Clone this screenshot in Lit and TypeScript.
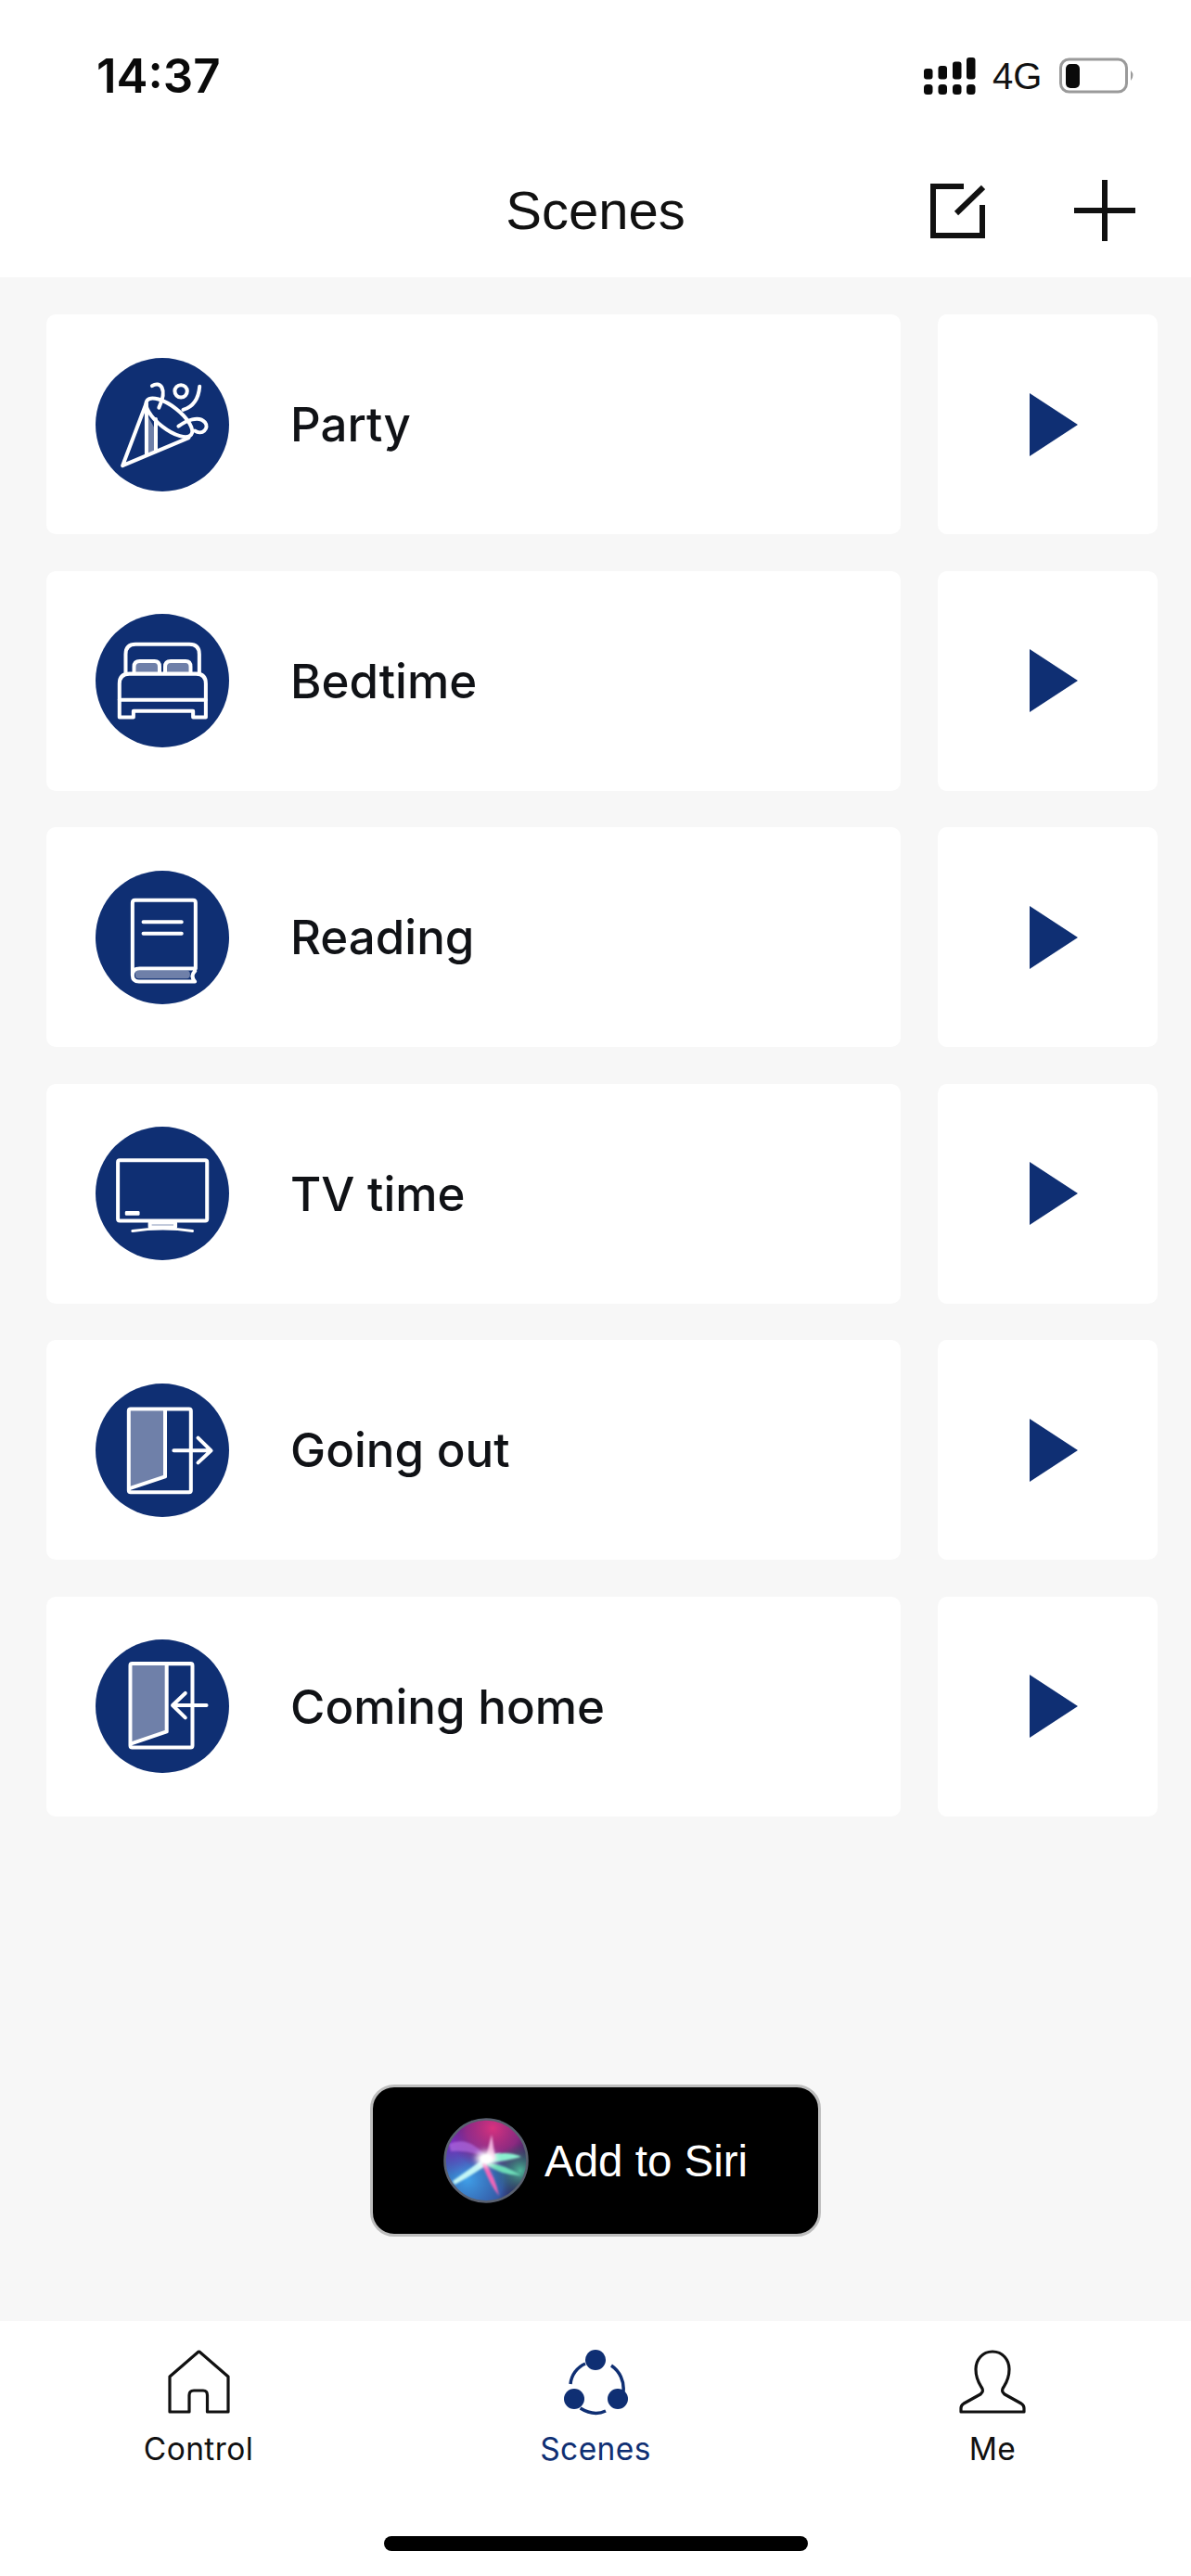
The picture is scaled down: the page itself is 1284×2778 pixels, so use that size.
import { LitElement, html, css, svg } from "lit";
import { customElement } from "lit/decorators.js";

const icons: Record<string, { vb: string; body: unknown }> = {
  party: {
    vb: "68 78 430 430",
    body: svg`
      <polygon class="g" points="232,258 260,308 260,378 232,392"/>
      <path d="M155 425 L232 222 M155 425 L368 335 M232 225 V388 M262 275 V375"/>
      <ellipse cx="305" cy="270" rx="90" ry="36" transform="rotate(38 305 270)"/>
      <path d="M250 168 C275 152 302 175 272 238"/>
      <circle cx="343" cy="185" r="20"/>
      <path d="M403 170 C400 208 382 235 350 245"/>
      <path d="M335 298 C360 280 400 262 420 285 C436 305 410 328 388 313"/>`,
  },
  bed: {
    vb: "68 65 430 430",
    body: svg`
      <rect class="g" x="197" y="222" width="72" height="32"/>
      <rect class="g" x="297" y="222" width="72" height="32"/>
      <path d="M165 255 V195 Q165 163 197 163 H370 Q402 163 402 195 V255"/>
      <path d="M192 256 V235 Q192 217 210 217 H258 Q274 217 274 235 V256"/>
      <path d="M292 256 V235 Q292 217 310 217 H358 Q374 217 374 235 V256"/>
      <path d="M145 398 V290 Q145 258 177 258 H392 Q423 258 423 290 V398 H382 V378 H190 V398 Z"/>
      <path d="M145 342 H423"/>`,
  },
  book: {
    vb: "68 85 430 430",
    body: svg`
      <rect class="g" x="196" y="407" width="176" height="25" rx="10"/>
      <path d="M187 420 V188 Q187 180 195 180 H382 Q390 180 390 188 V400 H210 Q187 400 187 422 Q187 442 208 442 H388 Q372 425 388 408"/>
      <path d="M222 250 H345 M222 287 H345"/>`,
  },
  tv: {
    vb: "68 75 430 430",
    body: svg`
      <rect x="140" y="183" width="287" height="195" rx="6"/>
      <rect class="w" x="163" y="347" width="47" height="14" rx="4"/>
      <rect x="243" y="385" width="82" height="13" fill="#5f7ba0" stroke="none"/>
      <path d="M187 411 Q285 396 380 411" style="stroke-width:9"/>`,
  },
  out: {
    vb: "68 95 430 430",
    body: svg`
      <polygon class="g" points="180,182 290,182 290,395 180,430"/>
      <rect x="175" y="177" width="200" height="268" rx="6"/>
      <path d="M292 180 V395 L180 432"/>
      <path d="M320 311 H438 M398 270 L440 311 L398 350"/>`,
  },
  in: {
    vb: "68 85 430 430",
    body: svg`
      <polygon class="g" points="185,170 295,170 295,380 185,418"/>
      <rect x="180" y="163" width="200" height="270" rx="6"/>
      <path d="M297 168 V382 L185 420"/>
      <path d="M425 297 H318 M357 258 L316 297 L357 337"/>`,
  },
};

const scenes = [
  { name: "Party", icon: "party" },
  { name: "Bedtime", icon: "bed" },
  { name: "Reading", icon: "book" },
  { name: "TV time", icon: "tv" },
  { name: "Going out", icon: "out" },
  { name: "Coming home", icon: "in" },
];

@customElement("app-root")
export class AppRoot extends LitElement {
  static styles = css`
    :host {
      display: flex;
      flex-direction: column;
      width: 1284px;
      height: 2778px;
      background: #f7f7f7;
      font-family: Inter, "Liberation Sans", sans-serif;
      color: #111;
    }
    .header {
      background: #fff;
      height: 299px;
      box-sizing: border-box;
      padding-top: 62px;
      flex: none;
    }
    .status {
      display: flex;
      align-items: center;
      height: 40px;
      padding: 0 60px 0 104px;
    }
    .time {
      font-size: 51px;
      font-weight: 600;
      line-height: 40px;
      color: #0a0a0a;
    }
    .sys {
      margin-left: auto;
      display: flex;
      align-items: center;
    }
    .sig { width: 56px; height: 40px; display: block; }
    .net {
      font-size: 40px;
      line-height: 40px;
      margin: 0 19px 0 18px;
      width: 53px;
      white-space: nowrap;
      font-family: "Liberation Sans", sans-serif;
    }
    .bat { width: 82px; height: 40px; display: block; }
    .nav {
      margin-top: 92px;
      height: 66px;
      display: grid;
      grid-template-columns: 1fr auto 1fr;
      align-items: center;
    }
    .title {
      grid-column: 2;
      font-size: 58px;
      font-weight: 400;
      line-height: 66px;
      font-family: "Liberation Sans", sans-serif;
      color: #111;
    }
    .actions {
      grid-column: 3;
      justify-self: end;
      display: flex;
      align-items: center;
      gap: 96px;
      padding-right: 60px;
    }
    .actions svg { display: block; }
    .edit { width: 59px; height: 59px; }
    .plus { width: 66px; height: 66px; }
    .main {
      flex: 1;
      display: flex;
      flex-direction: column;
      padding: 40px 36px 91px 50px;
    }
    .list { display: grid; gap: 39.6px; }
    .row {
      display: grid;
      grid-template-columns: 921px 237px;
      gap: 40px;
    }
    .card {
      background: #fff;
      border-radius: 10px;
      height: 237px;
      display: flex;
      align-items: center;
    }
    .scene { padding-left: 53px; gap: 66px; }
    .circle {
      width: 144px;
      height: 144px;
      border-radius: 50%;
      background: #0f2f73;
      flex: none;
    }
    .circle svg { width: 144px; height: 144px; display: block; }
    .circle path, .circle ellipse, .circle circle, .circle rect {
      fill: none;
      stroke: #fff;
      stroke-width: 12;
      stroke-linecap: round;
      stroke-linejoin: round;
    }
    .circle .g { fill: #6f80a9; stroke: none; }
    .circle .w { fill: #fff; stroke: none; }
    .name {
      font-size: 51px;
      font-weight: 500;
      color: #101216;
      white-space: nowrap;
    }
    .play { justify-content: center; padding-left: 12px; box-sizing: border-box; }
    .play svg { width: 52px; height: 68px; display: block; }
    .siri {
      margin: auto 0 0 349px;
      width: 486px;
      height: 164px;
      box-sizing: border-box;
      border: 3px solid #bdbdbd;
      border-radius: 26px;
      background: #000;
      display: flex;
      align-items: center;
      padding-left: 76px;
      gap: 17px;
    }
    .orb { width: 92px; height: 92px; display: block; flex: none; }
    .siri span {
      color: #fff;
      font-size: 47.5px;
      font-family: "Liberation Sans", sans-serif;
      white-space: nowrap;
    }
    .tabbar {
      flex: none;
      height: 275px;
      background: #fff;
      display: flex;
      flex-direction: column;
      box-sizing: border-box;
      padding-top: 28px;
    }
    .tabs { display: grid; grid-template-columns: repeat(3, 1fr); }
    .tab {
      display: flex;
      flex-direction: column;
      align-items: center;
      gap: 15px;
      font-size: 33.5px;
      line-height: 38px;
      color: #111;
      font-weight: 400;
      letter-spacing: 0.4px;
    }
    .tab svg { width: 76px; height: 76px; display: block; }
    .tab.on { color: #0f2f73; }
    .bar {
      margin: auto 0 27px 414px;
      width: 457px;
      height: 16px;
      border-radius: 8px;
      background: #000;
    }
  `;

  render() {
    return html`
      <div class="header">
        <div class="status">
          <div class="time">14:37</div>
          <div class="sys">
            <svg class="sig" viewBox="0 0 56 40" fill="#0a0a0a">
              <rect x="0" y="12" width="9.5" height="11.5" rx="3"/>
              <rect x="15.5" y="9" width="9.5" height="14.5" rx="3"/>
              <rect x="31" y="4.5" width="9.5" height="19" rx="3"/>
              <rect x="46" y="0" width="9.5" height="23.5" rx="3"/>
              <rect x="0" y="29" width="9.5" height="11" rx="3.5"/>
              <rect x="15.5" y="29" width="9.5" height="11" rx="3.5"/>
              <rect x="31" y="29" width="9.5" height="11" rx="3.5"/>
              <rect x="46" y="29" width="9.5" height="11" rx="3.5"/>
            </svg>
            <div class="net">4G</div>
            <svg class="bat" viewBox="0 0 82 40">
              <rect x="1.5" y="2" width="71" height="35" rx="9" fill="none" stroke="#9a9a9a" stroke-width="3"/>
              <rect x="7" y="7" width="15" height="26" rx="5" fill="#0a0a0a"/>
              <path d="M77 14 Q82 19 77 25 Z" fill="#9a9a9a"/>
            </svg>
          </div>
        </div>
        <div class="nav">
          <div class="title">Scenes</div>
          <div class="actions">
            <svg class="edit" viewBox="0 0 59 59" fill="none" stroke="#111" stroke-width="6">
              <path d="M36 3 H3 V56 H56 V23"/>
              <path d="M28 32 L57 4"/>
            </svg>
            <svg class="plus" viewBox="0 0 66 66" fill="none" stroke="#111" stroke-width="6">
              <path d="M33 0 V66 M0 33 H66"/>
            </svg>
          </div>
        </div>
      </div>
      <div class="main">
        <div class="list">
          ${scenes.map(
            (s) => html`
              <div class="row">
                <div class="card scene">
                  <div class="circle">
                    <svg viewBox=${icons[s.icon].vb}>${icons[s.icon].body}</svg>
                  </div>
                  <div class="name">${s.name}</div>
                </div>
                <div class="card play">
                  <svg viewBox="0 0 52 68"><polygon points="0,0 52,34 0,68" fill="#0f2f73"/></svg>
                </div>
              </div>
            `
          )}
        </div>
        <div class="siri">
          <svg class="orb" viewBox="0 0 92 92">
            <defs>
              <clipPath id="oc"><circle cx="46" cy="46" r="44"/></clipPath>
              <radialGradient id="ob" cx="28%" cy="72%" r="60%">
                <stop offset="0" stop-color="#3f9fe8"/><stop offset=".7" stop-color="#3568b8" stop-opacity=".8"/><stop offset="1" stop-color="#27407f" stop-opacity="0"/>
              </radialGradient>
              <radialGradient id="op" cx="58%" cy="12%" r="52%">
                <stop offset="0" stop-color="#d8327f"/><stop offset=".6" stop-color="#a02a88" stop-opacity=".8"/><stop offset="1" stop-color="#7a1f86" stop-opacity="0"/>
              </radialGradient>
              <radialGradient id="ov" cx="12%" cy="28%" r="40%">
                <stop offset="0" stop-color="#7d2fc0"/><stop offset="1" stop-color="#6a2ab0" stop-opacity="0"/>
              </radialGradient>
              <radialGradient id="og" cx="90%" cy="62%" r="32%">
                <stop offset="0" stop-color="#4fb59a"/><stop offset="1" stop-color="#2a5a5a" stop-opacity="0"/>
              </radialGradient>
              <filter id="bl" x="-30%" y="-30%" width="160%" height="160%"><feGaussianBlur stdDeviation="0.8"/></filter>
              <filter id="bl2" x="-60%" y="-60%" width="220%" height="220%"><feGaussianBlur stdDeviation="3"/></filter>
            </defs>
            <g clip-path="url(#oc)">
              <rect width="92" height="92" fill="#33285e"/>
              <rect width="92" height="92" fill="url(#ob)"/>
              <rect width="92" height="92" fill="url(#ov)"/>
              <rect width="92" height="92" fill="url(#op)"/>
              <rect width="92" height="92" fill="url(#og)"/>
              <path d="M6 28 Q28 18 48 44 Q30 34 8 36 Z" fill="#b06ae0" opacity=".7" filter="url(#bl)"/>
              <path d="M10 68 Q30 54 46 42 L62 38 Q42 56 12 72 Z" fill="#c4f6f6" filter="url(#bl)"/>
              <path d="M44 42 Q68 34 84 42 Q66 47 50 48 Z" fill="#8af0d0" filter="url(#bl)"/>
              <path d="M48 48 Q64 50 84 62 Q62 62 46 50 Z" fill="#6ddcb8" filter="url(#bl)"/>
              <path d="M52 18 L56 44 L44 50 Z" fill="#f0b0dc" filter="url(#bl)"/>
              <path d="M44 46 Q56 64 60 84 Q50 72 42 50 Z" fill="#f066b8" filter="url(#bl)"/>
              <ellipse cx="46" cy="44" rx="11" ry="8" fill="#fff" filter="url(#bl2)"/>
              <ellipse cx="46" cy="44" rx="6" ry="4" fill="#fff" filter="url(#bl)"/>
            </g>
            <circle cx="46" cy="46" r="44.5" fill="none" stroke="#5a6170" stroke-width="2.5"/>
          </svg>
          <span>Add to Siri</span>
        </div>
      </div>
      <div class="tabbar">
        <div class="tabs">
          <div class="tab">
            <svg viewBox="177 2529 76 76" fill="none" stroke="#111" stroke-width="3.2" stroke-linejoin="round">
              <path d="M184 2599 V2561 L214 2535 Q215.5 2533.5 217 2535 L247 2561 V2599 H224.5 V2581 Q224.5 2576 220 2576 H210 Q205 2576 205 2581 V2599 Z"/>
            </svg>
            <span>Control</span>
          </div>
          <div class="tab on">
            <svg viewBox="604 2529 76 76" fill="#0f2f73">
              <circle cx="642" cy="2543" r="11"/>
              <circle cx="619" cy="2585" r="11"/>
              <circle cx="666" cy="2585" r="11"/>
              <path d="M631 2547 A27 27 0 0 0 615 2569 M659 2549 A30 30 0 0 1 672 2577 M625.6 2595 Q640 2604 653 2598" fill="none" stroke="#0f2f73" stroke-width="3.5"/>
            </svg>
            <span>Scenes</span>
          </div>
          <div class="tab">
            <svg viewBox="1031 2529 76 76" fill="none" stroke="#111" stroke-width="3.2" stroke-linejoin="round">
              <path d="M1069 2534 C1080 2534 1087 2543 1087 2553 C1087 2565 1082 2570 1080 2574 C1079 2577 1080 2578 1082 2580 L1100 2590 Q1103 2592 1103 2595 V2599 H1035 V2595 Q1035 2592 1038 2590 L1056 2580 C1058 2578 1059 2577 1058 2574 C1056 2570 1051 2565 1051 2553 C1051 2543 1058 2534 1069 2534 Z"/>
            </svg>
            <span>Me</span>
          </div>
        </div>
        <div class="bar"></div>
      </div>
    `;
  }
}
